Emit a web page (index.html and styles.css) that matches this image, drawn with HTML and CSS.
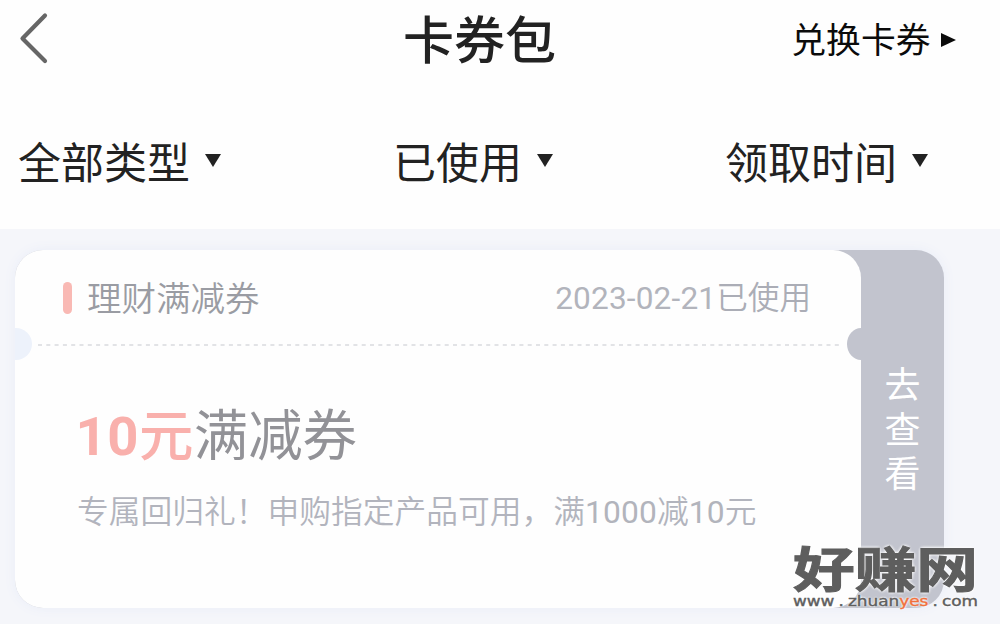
FILE: index.html
```
<!DOCTYPE html>
<html lang="zh-CN">
<head>
<meta charset="utf-8">
<title>卡券包</title>
<link rel="stylesheet" href="styles.css">
</head>
<body>
<header class="topbar">
  <svg class="back" width="30" height="52" viewBox="0 0 30 52" fill="none" stroke="#666" stroke-width="4.2" stroke-linecap="round" stroke-linejoin="round"><path d="M26 3.5 3.5 26.5 26 49"/></svg>
  <h1 class="title">卡券包</h1>
  <div class="exchange"><span>兑换卡券</span><svg width="15" height="16" viewBox="0 0 15 16"><path d="M0 1 15 8 0 15Z" fill="#0b0b0b"/></svg></div>
</header>
<nav class="filters">
  <div class="filter"><span>全部类型</span><svg width="16" height="13" viewBox="0 0 16 13"><path d="M0 0H16L8 13Z" fill="#222"/></svg></div>
  <div class="filter"><span>已使用</span><svg width="16" height="13" viewBox="0 0 16 13"><path d="M0 0H16L8 13Z" fill="#222"/></svg></div>
  <div class="filter"><span>领取时间</span><svg width="16" height="13" viewBox="0 0 16 13"><path d="M0 0H16L8 13Z" fill="#222"/></svg></div>
</nav>
<main class="list">
  <article class="coupon">
    <div class="card">
      <div class="card-head">
        <i class="mark"></i>
        <span class="kind">理财满减券</span>
        <span class="date"><span class="digits">2023-02-21</span>已使用</span>
      </div>
      <svg class="divider" width="846" height="32" viewBox="0 0 846 32">
        <path d="M0 0h1a16 16 0 0 1 0 32h-1Z" fill="#edf2fb"/>
        <path d="M846 0a14 16 0 0 0 0 32Z" fill="#c2c4ce"/>
        <path d="M23 17H826" stroke="#e2e3e6" stroke-width="1.8" stroke-dasharray="4 4.3"/>
      </svg>
      <div class="card-body">
        <div class="amount"><b>10<span class="unit">元</span></b>满减券</div>
        <div class="desc">专属回归礼！申购指定产品可用，满<span class="digits">1000</span>减<span class="digits">10</span>元</div>
      </div>
    </div>
    <div class="action"><span>去</span><span>查</span><span>看</span></div>
  </article>
</main>
<div class="watermark">
  <div class="wm-name">好赚网</div>
  <div class="wm-url"><span>www</span><span>.</span><span>zhuan<em>yes</em></span><span>.</span><span>com</span></div>
</div>
</body>
</html>
```
FILE: styles.css
```
* { box-sizing: border-box; }
body {
  margin: 0;
  width: 1000px;
  height: 624px;
  overflow: hidden;
  position: relative;
  background: #fefefe;
  color: #222;
  font-family: Roboto, "Noto Sans CJK SC", sans-serif;
}
svg { display: block; flex: none; }
.topbar {
  display: grid;
  grid-template-columns: 383px 1fr auto;
  align-items: center;
  height: 80px;
  padding: 0 44px 0 20px;
}
.back { margin: -4px 0 0 -1px; }
.title {
  margin: 0;
  height: 80px;
  font-size: 51px;
  line-height: 84px;
  font-weight: 500;
}
.exchange {
  display: flex;
  align-items: center;
  gap: 10.5px;
  height: 80px;
  color: #0b0b0b;
  font-size: 34.8px;
  line-height: 80px;
}
.exchange span { padding-top: 2px; }
.exchange svg { margin-top: -1px; }
.filters {
  display: grid;
  grid-template-columns: 375px 332px 1fr;
  height: 149px;
  padding: 53px 0 0 18px;
}
.filter {
  display: flex;
  align-items: center;
  gap: 14.5px;
  height: 56px;
  font-size: 43px;
  line-height: 56px;
}
.filter span { padding-top: 5px; }
.filter svg { margin-top: -2px; }
.list {
  height: 395px;
  padding: 21px 0 0 15px;
  background: #f5f6fa;
}
.coupon {
  display: flex;
  width: 929px;
  height: 358px;
  border-radius: 28px;
  background: #c2c4ce;
  box-shadow: 0 0 12px #e9edf8;
}
.card {
  width: 846px;
  height: 358px;
  border-radius: 28px;
  background: #fefefe;
}
.card-head {
  display: flex;
  align-items: center;
  height: 78px;
  padding: 18px 50px 0 48px;
}
.mark {
  width: 9px;
  height: 32px;
  border-radius: 4.5px;
  background: #f9b9b4;
}
.kind {
  margin: 2px 0 0 15px;
  color: #9a9ca3;
  font-size: 34.5px;
  line-height: 50px;
  font-weight: 350;
}
.date {
  margin: 2px 0 0 auto;
  color: #abadb6;
  font-size: 31.6px;
  line-height: 50px;
  font-weight: 350;
}
.digits { font-weight: 400; letter-spacing: .15px; color: #b2b4bc; }
.card-body { padding: 41px 0 0 62px; }
.amount {
  color: #929297;
  font-size: 54.4px;
  line-height: 72px;
}
.amount b {
  color: #f9b0ac;
  font-weight: 700;
  letter-spacing: .5px;
  margin-left: -1.5px;
}
.unit { font-weight: 500; }
.desc {
  margin-top: 16px;
  color: #b2b4bd;
  font-size: 31.75px;
  line-height: 48px;
  font-weight: 350;
  white-space: nowrap;
}
.action {
  display: flex;
  flex: 1;
  flex-direction: column;
  align-items: center;
  padding-top: 114px;
  color: #fff;
  font-size: 36px;
  line-height: 44.5px;
}
.watermark {
  position: absolute;
  left: 793px;
  top: 540px;
  width: 186px;
  color: #5e5e5e;
}
.wm-name {
  width: 144px;
  font-family: "Noto Sans CJK SC", sans-serif;
  font-size: 48px;
  line-height: 52px;
  font-weight: 700;
  transform: scaleX(1.285);
  transform-origin: 0 0;
  -webkit-text-stroke: 1px currentColor;
  text-shadow: 0 0 3px #fff, 0 0 3px #fff, 0 0 3px #fff;
}
.wm-url {
  display: flex;
  justify-content: space-between;
  width: 148px;
  font-family: "DejaVu Sans", sans-serif;
  font-size: 13.5px;
  line-height: 18px;
  transform: scaleX(1.25);
  transform-origin: 0 0;
  -webkit-text-stroke: .4px currentColor;
  text-shadow: 0 0 2px #fff, 0 0 2px #fff, 0 0 2px #fff;
}
.wm-url em { color: #f0703c; font-style: normal; }
```
